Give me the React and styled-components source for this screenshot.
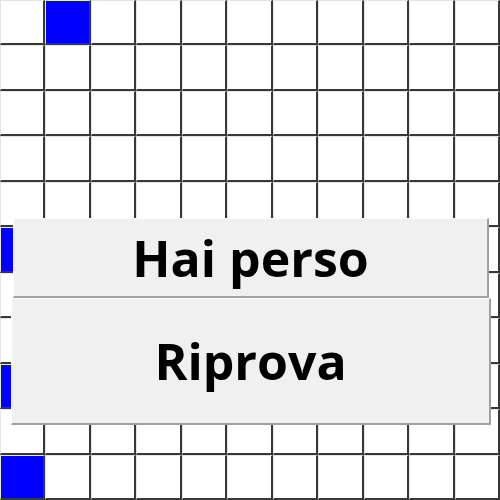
import styled, { createGlobalStyle } from "styled-components";

const GlobalStyle = createGlobalStyle`
  html, body {
    margin: 0;
    padding: 0;
    background: #ffffff;
    overflow: hidden;
  }
`;

const Board = styled.div`
  position: relative;
  width: 500px;
  height: 500px;
  display: grid;
  grid-template-columns: repeat(11, 1fr);
  grid-template-rows: repeat(11, 1fr);
  font-family: "Open Sans", "Liberation Sans", sans-serif;
`;

const Cell = styled.div`
  box-sizing: border-box;
  background: ${(p) => (p.$on ? "#0000ff" : "#ffffff")};
  border-top: 1px solid #e4e4e4;
  border-left: 1px solid #e4e4e4;
  border-right: 2px solid #383838;
  border-bottom: 2px solid #383838;
`;

const Dialog = styled.div`
  position: absolute;
  left: 11px;
  top: 218px;
  width: 480px;
  display: flex;
  flex-direction: column;
`;

const Panel = styled.div`
  box-sizing: border-box;
  height: ${(p) => p.$h}px;
  margin: 0 ${(p) => p.$inset}px;
  background: #f0f0f0;
  border-top: 1px solid #ffffff;
  border-left: 1px solid #ffffff;
  border-right: 2px solid #a0a0a0;
  border-bottom: 2px solid #a0a0a0;
  display: flex;
  align-items: center;
  justify-content: center;
  font-size: 50px;
  font-weight: 700;
  color: #000000;
  cursor: ${(p) => (p.$button ? "pointer" : "default")};
`;

const blue = [[0, 1], [5, 0], [8, 0], [10, 0]];

const App = () => {
  const cells = [];
  for (let r = 0; r < 11; r++) {
    for (let c = 0; c < 11; c++) {
      const on = blue.some(([br, bc]) => br === r && bc === c);
      cells.push(<Cell key={r + "-" + c} $on={on} />);
    }
  }
  return (
    <>
      <GlobalStyle />
      <Board>
        {cells}
        <Dialog>
          <Panel $h={80} $inset={2}>Hai perso</Panel>
          <Panel $h={127} $inset={0} $button>Riprova</Panel>
        </Dialog>
      </Board>
    </>
  );
};

export default App;
